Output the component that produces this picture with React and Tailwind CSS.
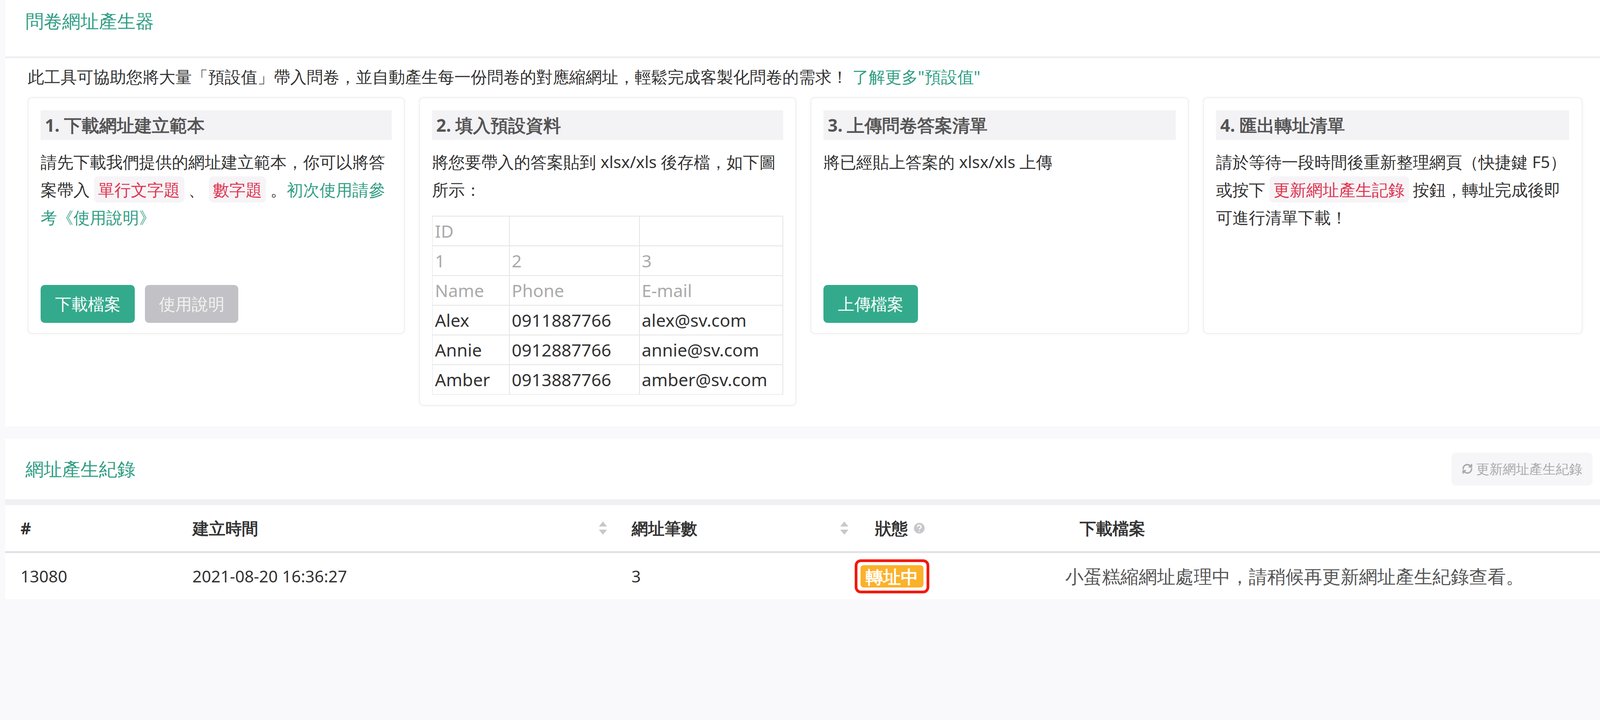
import { RefreshCw, HelpCircle } from "lucide-react";

const green = "text-[#2f9e84]";

function Tag({ children }) {
  return <span className="mx-1 rounded bg-[#f6f4f6] px-1 py-0.5 text-[#e0314f]">{children}</span>;
}

function StepCard({ title, children, className = "" }) {
  return (
    <div className={"flex flex-col rounded border border-[#eeeef0] bg-white px-[12px] pt-[12px] pb-[10px] shadow-[0_0_3px_rgba(0,0,0,0.05)] " + className}>
      <div className="flex h-[29px] items-center bg-[#f3f2f5] px-[4px] text-[17px] font-bold text-[#555]">{title}</div>
      {children}
    </div>
  );
}

const rows = [
  ["ID", "", "", true],
  ["1", "2", "3", true],
  ["Name", "Phone", "E-mail", true],
  ["Alex", "0911887766", "alex@sv.com"],
  ["Annie", "0912887766", "annie@sv.com"],
  ["Amber", "0913887766", "amber@sv.com"],
];

function SortIcon() {
  return (
    <svg width="8" height="13" viewBox="0 0 8 13" className="fill-[#c8c8cc]">
      <path d="M4 0L8 5H0z" />
      <path d="M4 13L0 8h8z" />
    </svg>
  );
}

export default function App() {
  return (
    <div className="h-[1842px] w-full overflow-hidden bg-[#f9f8fa]">
      <div className="w-[1568px] [zoom:2.62] font-['Roboto','Noto_Sans_CJK_TC',sans-serif] text-[16px] text-[#333]">
        <div className="ml-[5px] bg-white">
          <div className="flex h-[57px] items-center border-b-2 border-[#f0eff2] px-[20px] pb-[14px] text-[18px] text-[#2f9e84]">問卷網址產生器</div>
          <div className="px-[22px] pb-[20px]">
            <p className="pt-[6px] pb-[8px] leading-[24px]">
              此工具可協助您將大量「預設值」帶入問卷，並自動產生每一份問卷的對應縮網址，輕鬆完成客製化問卷的需求！ <span className={green}>了解更多"預設值"</span>
            </p>
            <div className="flex items-start gap-[14px]">
              <StepCard title="1. 下載網址建立範本" className="h-[231px] w-[369px]">
                <p className="mt-[8px] leading-[27px]">
                  請先下載我們提供的網址建立範本，你可以將答案帶入<Tag>單行文字題</Tag>、<Tag>數字題</Tag>。<span className={green}>初次使用請參考《使用說明》</span>
                </p>
                <div className="mt-auto flex gap-[10px]">
                  <button className="h-[37px] w-[92px] rounded bg-[#34aa8c] text-white">下載檔案</button>
                  <button className="h-[37px] w-[91px] rounded bg-[#c2c1c5] text-[#f2f2f2]">使用說明</button>
                </div>
              </StepCard>
              <StepCard title="2. 填入預設資料" className="w-[369px]">
                <p className="mt-[8px] leading-[27px]">將您要帶入的答案貼到 xlsx/xls 後存檔，如下圖所示：</p>
                <table className="mt-[12px] w-full border border-[#eeeeee] text-[17px]">
                  <tbody>
                    {rows.map((r, i) => (
                      <tr key={i} className="h-[29px] border-t border-[#e4e4e6]">
                        {r.slice(0, 3).map((c, j) => (
                          <td key={j} className={"border-r border-[#e4e4e6] px-[2px] " + (j === 0 ? "w-[75px] " : j === 1 ? "w-[127px] " : "") + (r[3] ? "text-[#aaa]" : "text-[#333]")}>
                            {c}
                          </td>
                        ))}
                      </tr>
                    ))}
                  </tbody>
                </table>
              </StepCard>
              <StepCard title="3. 上傳問卷答案清單" className="h-[231px] w-[370px]">
                <p className="mt-[8px] leading-[27px]">將已經貼上答案的 xlsx/xls 上傳</p>
                <button className="mt-auto h-[37px] w-[92px] rounded bg-[#34aa8c] text-white">上傳檔案</button>
              </StepCard>
              <StepCard title="4. 匯出轉址清單" className="h-[231px] w-[371px]">
                <p className="mt-[8px] leading-[27px]">
                  請於等待一段時間後重新整理網頁（快捷鍵 F5）或按下<Tag>更新網址產生記錄</Tag>按鈕，轉址完成後即可進行清單下載！
                </p>
              </StepCard>
            </div>
          </div>
        </div>
        <div className="ml-[5px] mt-[12px] bg-white">
          <div className="flex h-[65px] items-center justify-between border-b-[6px] border-[#f0eff2] pl-[20px] pr-[12px]">
            <span className="text-[18px] text-[#2f9e84]">網址產生紀錄</span>
            <button className="flex h-[32px] items-center gap-[3px] rounded bg-[#f6f5f8] px-[10px] text-[13px] text-[#aaa]">
              <RefreshCw size={11} strokeWidth={3} />更新網址產生紀錄
            </button>
          </div>
          <div className="flex h-[47px] items-center border-b-2 border-[#e2e1e5] font-bold">
            <div className="w-[183px] pl-[15px]">#</div>
            <div className="flex w-[417px] items-center justify-between pr-[12px]">建立時間<SortIcon /></div>
            <div className="flex w-[236px] items-center justify-between pl-[12px] pr-[12px]">網址筆數<SortIcon /></div>
            <div className="flex w-[200px] items-center gap-1 pl-[14px]">狀態<HelpCircle size={14} className="text-white" fill="#c8c8cc" /></div>
            <div className="pl-[14px]">下載檔案</div>
          </div>
          <div className="flex h-[45px] items-center">
            <div className="w-[183px] pl-[15px]">13080</div>
            <div className="w-[417px]">2021-08-20 16:36:27</div>
            <div className="w-[236px] pl-[12px]">3</div>
            <div className="w-[200px] pl-[-4px]">
              <span className="-ml-[6px] inline-block rounded-[6px] border-[3px] border-[#f21a0c] p-[3px]">
                <span className="block rounded-[3px] bg-[#fbb12a] px-[5px] text-[17px] font-bold leading-[22px] text-white">轉址中</span>
              </span>
            </div>
            <div className="text-[18px] text-[#555]">小蛋糕縮網址處理中，請稍候再更新網址產生紀錄查看。</div>
          </div>
        </div>
      </div>
    </div>
  );
}
